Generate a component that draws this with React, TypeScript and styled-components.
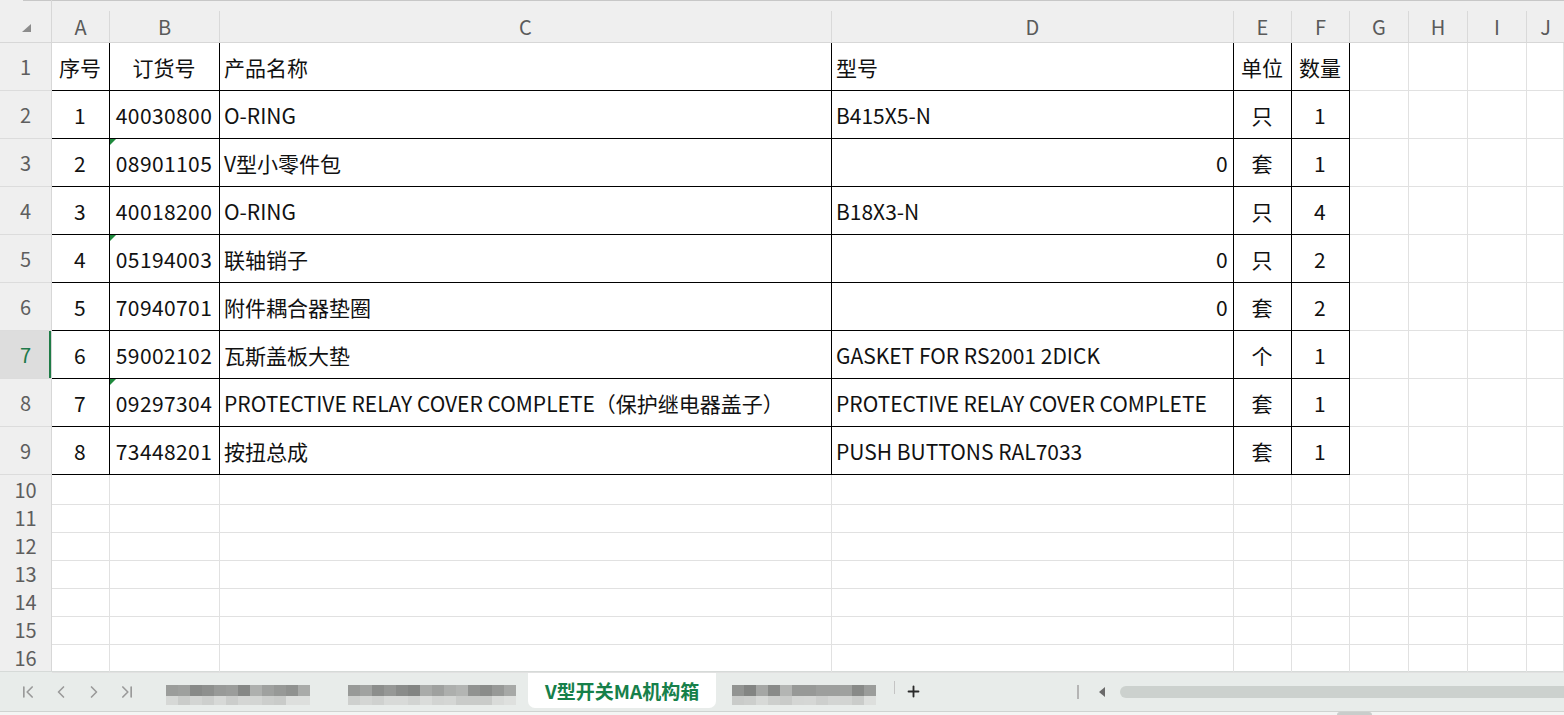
import React from 'react';
import styled, { createGlobalStyle, css } from 'styled-components';
import { ChevronFirst, ChevronLeft, ChevronRight, ChevronLast, Plus } from 'lucide-react';

const GlobalStyle = createGlobalStyle`
  html, body {
    margin: 0;
    padding: 0;
    background: #ffffff;
    overflow: hidden;
  }
  body {
    font-family: "Noto Sans CJK SC", "Noto Sans", sans-serif;
  }
  * {
    box-sizing: border-box;
  }
`;

const COLS = '52px 58px 110px 612px 402px 58px 58px 59px 59px 59px 1fr';

const Page = styled.div`
  width: 1564px;
  height: 715px;
  display: flex;
  flex-direction: column;
  overflow: hidden;
`;

const HeaderRow = styled.div`
  display: grid;
  grid-template-columns: ${COLS};
  align-items: end;
  height: 43px;
  background: linear-gradient(#c7c7c7, #c7c7c7) no-repeat 23px 0 / 100% 1px, #efefef;
  border-bottom: 1px solid #d7d7d7;
`;

const Corner = styled.div`
  height: 42px;
  display: flex;
  align-items: center;
  justify-content: center;
  padding-top: 14px;
  padding-left: 2px;
  border-right: 1px solid #d7d7d7;
`;

const CornerMark = styled.span`
  width: 0;
  height: 0;
  border-left: 9px solid transparent;
  border-bottom: 8px solid #8c8c8c;
`;

const ColLabel = styled.div`
  height: 31px;
  display: flex;
  align-items: center;
  justify-content: center;
  border-right: 1px solid #d9d9d9;
  font-size: 20px;
  color: #5a5a5a;
  &:last-child {
    border-right: none;
  }
`;

const Row = styled.div<{ $h: number }>`
  display: grid;
  grid-template-columns: ${COLS};
  height: ${({ $h }) => $h}px;
`;

const RowHead = styled.div<{ $active?: boolean }>`
  display: flex;
  align-items: center;
  justify-content: center;
  background: #efefef;
  border-right: 1px solid #d7d7d7;
  border-bottom: 1px solid #dcdcdc;
  font-size: 20px;
  color: #5e5e5e;
  ${({ $active }) =>
    $active &&
    css`
      background: #dddddd;
      color: #1f7a4a;
      box-shadow: inset -2px 0 0 #1e7b46;
    `}
`;

const Cell = styled.div<{ $align?: 'left' | 'center' | 'right'; $boxed?: boolean; $flag?: boolean; $num?: boolean }>`
  position: relative;
  display: flex;
  align-items: center;
  justify-content: ${({ $align }) =>
    $align === 'center' ? 'center' : $align === 'right' ? 'flex-end' : 'flex-start'};
  padding: 0 5px 0 4px;
  white-space: nowrap;
  font-size: 21px;
  color: #111111;
  letter-spacing: ${({ $num }) => ($num ? '0.4px' : '0')};
  border-right: 1px solid ${({ $boxed }) => ($boxed ? '#000000' : '#e1e1e1')};
  border-bottom: 1px solid ${({ $boxed }) => ($boxed ? '#000000' : '#e1e1e1')};
  ${({ $flag }) =>
    $flag &&
    css`
      &::before {
        content: '';
        position: absolute;
        top: 0;
        left: 0;
        border-top: 6px solid #1f8a3d;
        border-right: 6px solid transparent;
      }
    `}
`;

const TabBar = styled.div`
  flex: 1;
  display: flex;
  flex-direction: column;
  background: #e8ecea;
  border-top: 1px solid #d6dad8;
`;

const TabStrip = styled.div`
  height: 39px;
  display: flex;
  align-items: center;
`;

const NavGroup = styled.div`
  width: 150px;
  display: flex;
  align-items: center;
  gap: 13px;
  padding-left: 18px;
  color: #9a9a9a;
`;

const SheetTab = styled.div<{ $w: number }>`
  width: ${({ $w }) => $w}px;
  height: 100%;
  display: flex;
  align-items: center;
  padding-left: ${({ $w }) => ($w > 180 ? 18 : 16)}px;
`;

const Mosaic = styled.div<{ $cols: number }>`
  display: grid;
  grid-template-columns: repeat(${({ $cols }) => $cols}, 12px);
  grid-template-rows: 11px 9px;
  filter: blur(0.7px);
  margin-top: 6px;
`;

const Tile = styled.span<{ $shade: number }>`
  background: ${({ $shade }) => `rgb(${$shade}, ${$shade + 2}, ${$shade})`};
`;

const ActiveTab = styled.div`
  align-self: flex-start;
  width: 188px;
  height: 36px;
  display: flex;
  align-items: center;
  padding-left: 17px;
  background: #ffffff;
  border-radius: 0 0 7px 7px;
  font-size: 19px;
  font-weight: 700;
  color: #16804a;
`;

const TabDivider = styled.span`
  width: 1px;
  height: 13px;
  margin-top: -8px;
  background: #c4c4c4;
`;

const AddButton = styled.span`
  display: flex;
  margin-left: 10px;
  color: #2a2a2a;
`;

const Spacer = styled.div`
  flex: 1;
`;

const ScrollZone = styled.div`
  width: 490px;
  display: flex;
  align-items: center;
  padding-left: 3px;
`;

const ScrollDivider = styled.span`
  width: 2px;
  height: 14px;
  background: #b5b5b5;
`;

const ScrollArrow = styled.span`
  margin-left: 20px;
  width: 0;
  height: 0;
  border-top: 5px solid transparent;
  border-bottom: 5px solid transparent;
  border-right: 6px solid #6a6a6a;
`;

const ScrollTrack = styled.span`
  flex: 1;
  height: 12px;
  margin-left: 15px;
  margin-right: -20px;
  border-radius: 6px;
  background: #ccd1ce;
`;

const Foot = styled.div`
  flex: 1;
  display: flex;
  align-items: flex-end;
  background: #f4f5f4;
  border-top: 1px solid #d0d3d1;
`;

const FootKnob = styled.span`
  width: 35px;
  height: 3px;
  margin-left: 1337px;
  border-radius: 3px 3px 0 0;
  background: #c9cdcb;
`;

type Align = 'left' | 'center' | 'right';
type Item = { v: string; a: Align; flag?: boolean; num?: boolean };

const c = (v: string, a: Align = 'left', extra: Partial<Item> = {}): Item => ({ v, a, ...extra });

const rows: Item[][] = [
  [c('序号', 'center'), c('订货号', 'center'), c('产品名称'), c('型号'), c('单位', 'center'), c('数量', 'center')],
  [c('1', 'center', { num: true }), c('40030800', 'center', { num: true }), c('O-RING'), c('B415X5-N'), c('只', 'center'), c('1', 'center', { num: true })],
  [c('2', 'center', { num: true }), c('08901105', 'center', { num: true, flag: true }), c('V型小零件包'), c('0', 'right', { num: true }), c('套', 'center'), c('1', 'center', { num: true })],
  [c('3', 'center', { num: true }), c('40018200', 'center', { num: true }), c('O-RING'), c('B18X3-N'), c('只', 'center'), c('4', 'center', { num: true })],
  [c('4', 'center', { num: true }), c('05194003', 'center', { num: true, flag: true }), c('联轴销子'), c('0', 'right', { num: true }), c('只', 'center'), c('2', 'center', { num: true })],
  [c('5', 'center', { num: true }), c('70940701', 'center', { num: true }), c('附件耦合器垫圈'), c('0', 'right', { num: true }), c('套', 'center'), c('2', 'center', { num: true })],
  [c('6', 'center', { num: true }), c('59002102', 'center', { num: true }), c('瓦斯盖板大垫'), c('GASKET FOR RS2001 2DICK'), c('个', 'center'), c('1', 'center', { num: true })],
  [c('7', 'center', { num: true }), c('09297304', 'center', { num: true, flag: true }), c('PROTECTIVE RELAY COVER COMPLETE（保护继电器盖子）'), c('PROTECTIVE RELAY COVER COMPLETE'), c('套', 'center'), c('1', 'center', { num: true })],
  [c('8', 'center', { num: true }), c('73448201', 'center', { num: true }), c('按扭总成'), c('PUSH BUTTONS RAL7033'), c('套', 'center'), c('1', 'center', { num: true })],
];

const letters = ['A', 'B', 'C', 'D', 'E', 'F', 'G', 'H', 'I', 'J'];

const shades = (count: number, seed: number) => {
  const out: number[] = [];
  let s = seed;
  for (let i = 0; i < count * 2; i++) {
    s = (s * 9301 + 49297) % 233280;
    const r = s / 233280;
    out.push(i < count ? 130 + Math.round(r * 50) : 200 + Math.round(r * 22));
  }
  return out;
};

const Blurred = ({ cols, seed }: { cols: number; seed: number }) => (
  <Mosaic $cols={cols}>
    {shades(cols, seed).map((s, i) => (
      <Tile key={i} $shade={s} />
    ))}
  </Mosaic>
);

const App = () => {
  return (
    <Page>
      <GlobalStyle />
      <HeaderRow>
        <Corner>
          <CornerMark />
        </Corner>
        {letters.map((l) => (
          <ColLabel key={l}>{l}</ColLabel>
        ))}
      </HeaderRow>

      {rows.map((r, i) => (
        <Row key={i} $h={48}>
          <RowHead $active={i === 6}>{i + 1}</RowHead>
          {r.map((it, j) => (
            <Cell key={j} $align={it.a} $boxed $flag={it.flag} $num={it.num}>
              {it.v}
            </Cell>
          ))}
          <Cell />
          <Cell />
          <Cell />
          <Cell />
        </Row>
      ))}

      {[10, 11, 12, 13, 14, 15, 16].map((n) => (
        <Row key={n} $h={28}>
          <RowHead>{n}</RowHead>
          {letters.map((l) => (
            <Cell key={l} />
          ))}
        </Row>
      ))}

      <TabBar>
        <TabStrip>
          <NavGroup>
            <ChevronFirst size={20} strokeWidth={2} />
            <ChevronLeft size={20} strokeWidth={2} />
            <ChevronRight size={20} strokeWidth={2} />
            <ChevronLast size={20} strokeWidth={2} />
          </NavGroup>
          <SheetTab $w={180}>
            <Blurred cols={12} seed={7} />
          </SheetTab>
          <SheetTab $w={198}>
            <Blurred cols={14} seed={31} />
          </SheetTab>
          <ActiveTab>V型开关MA机构箱</ActiveTab>
          <SheetTab $w={178}>
            <Blurred cols={12} seed={53} />
          </SheetTab>
          <TabDivider />
          <AddButton>
            <Plus size={17} strokeWidth={2.6} />
          </AddButton>
          <Spacer />
          <ScrollZone>
            <ScrollDivider />
            <ScrollArrow />
            <ScrollTrack />
          </ScrollZone>
        </TabStrip>
        <Foot>
          <FootKnob />
        </Foot>
      </TabBar>
    </Page>
  );
};

export default App;
